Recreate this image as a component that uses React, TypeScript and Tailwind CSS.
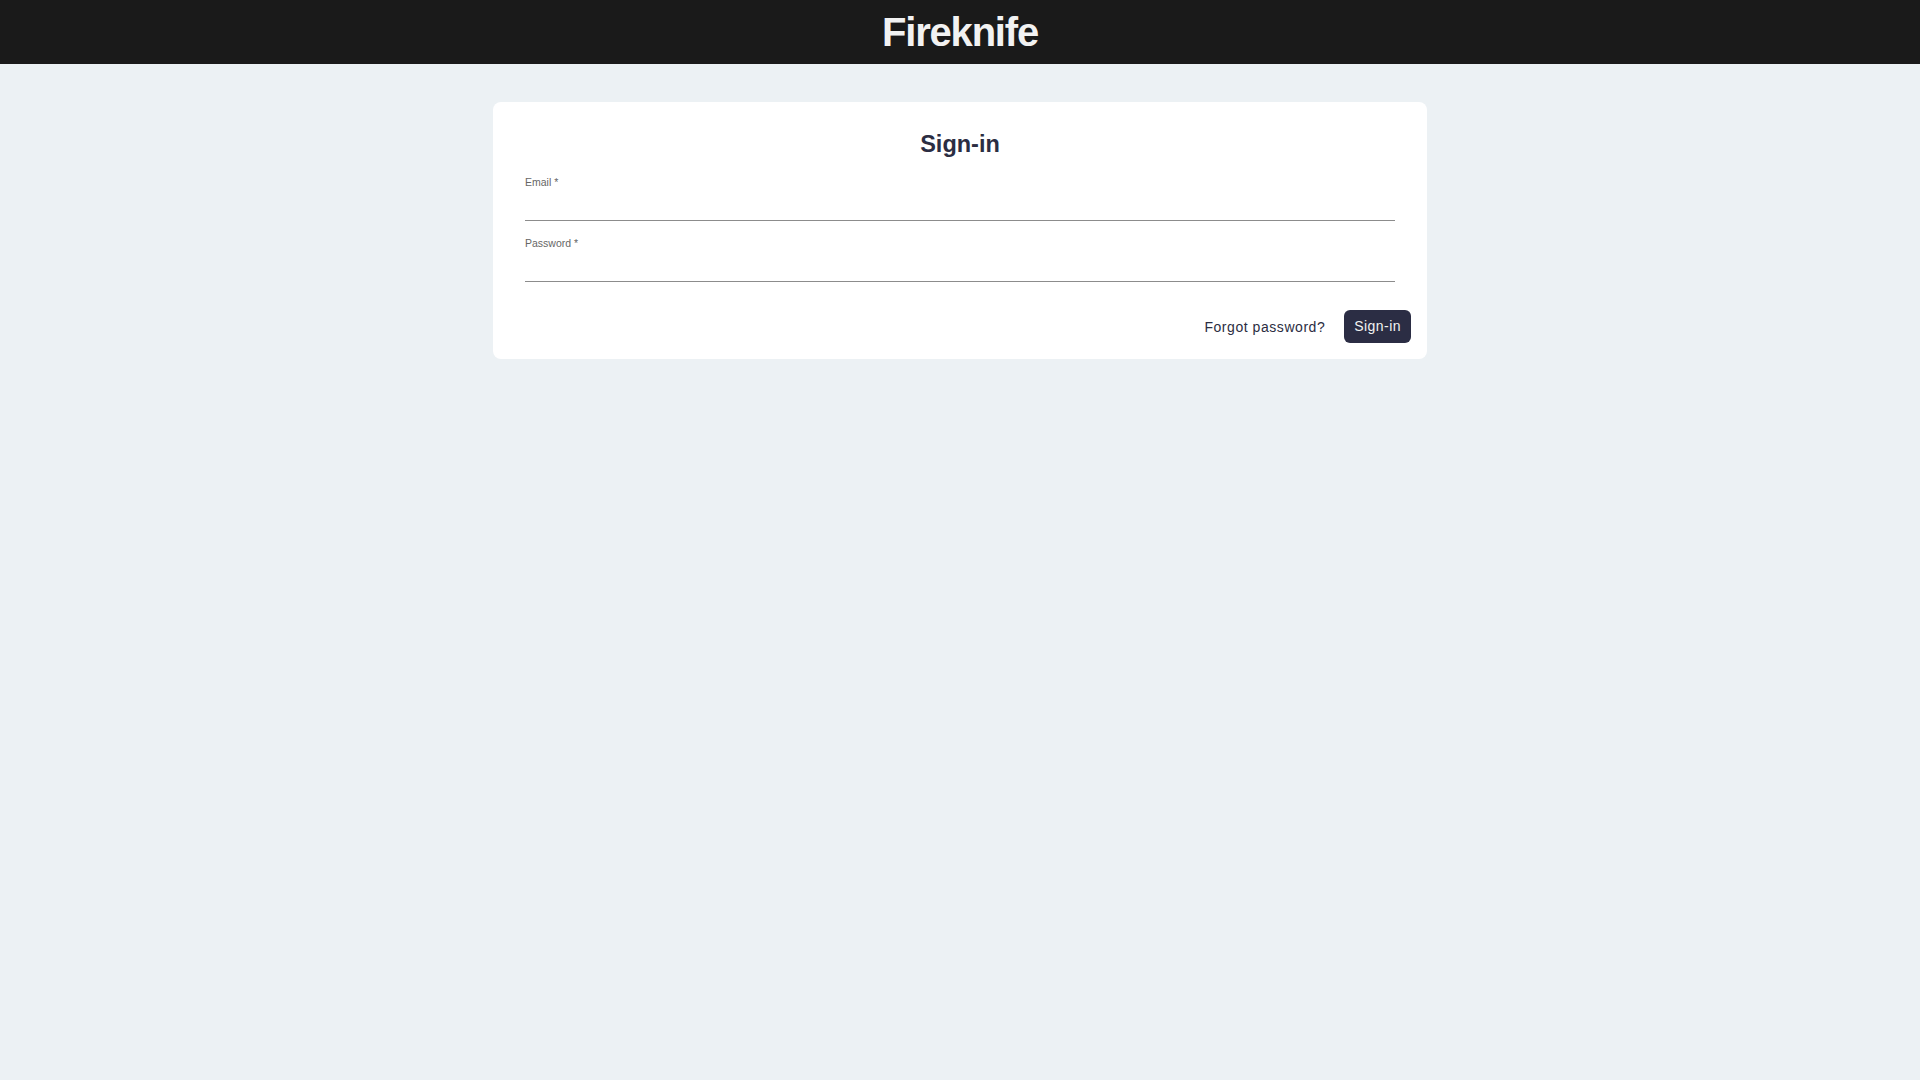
import React from "react";

const font = { fontFamily: '"Liberation Sans", Arial, sans-serif' };

function Field({ label, type }: { label: string; type: string }) {
  return (
    <div className="flex flex-col">
      <label className="text-[10.5px] leading-[12px] text-[#666666]">{label} *</label>
      <input
        type={type}
        className="h-[33px] w-full border-b border-[#8c8c8c] bg-transparent outline-none text-[14px] text-[#2b2d42]"
        style={font}
      />
    </div>
  );
}

export default function App() {
  return (
    <div className="min-h-screen w-full bg-[#ecf1f4]" style={font}>
      <header className="h-[64px] bg-[#1a1a1a] flex items-center justify-center">
        <h1 className="text-[40px] font-bold leading-none tracking-[-1.2px] text-[#f2f2f2]">Fireknife</h1>
      </header>
      <main className="pt-[38px]">
        <div className="mx-auto w-[934px] bg-white rounded-[8px] pt-[26px] pb-[16px]">
          <h2 className="text-center text-[23.5px] leading-[32px] font-bold text-[#2b2d42]">Sign-in</h2>
          <div className="px-[32px] mt-[16px] flex flex-col gap-[16px]">
            <Field label="Email" type="email" />
            <Field label="Password" type="password" />
          </div>
          <div className="mt-[28px] px-[16px] flex justify-end items-center gap-[19px]">
            <button className="text-[14px] tracking-[0.55px] text-[#2b2d42] leading-[20px]">Forgot password?</button>
            <button className="h-[33px] px-[10px] rounded-[6px] bg-[#2b2d44] text-[14px] tracking-[0.45px] text-[#f2f2f2]">Sign-in</button>
          </div>
        </div>
      </main>
    </div>
  );
}
